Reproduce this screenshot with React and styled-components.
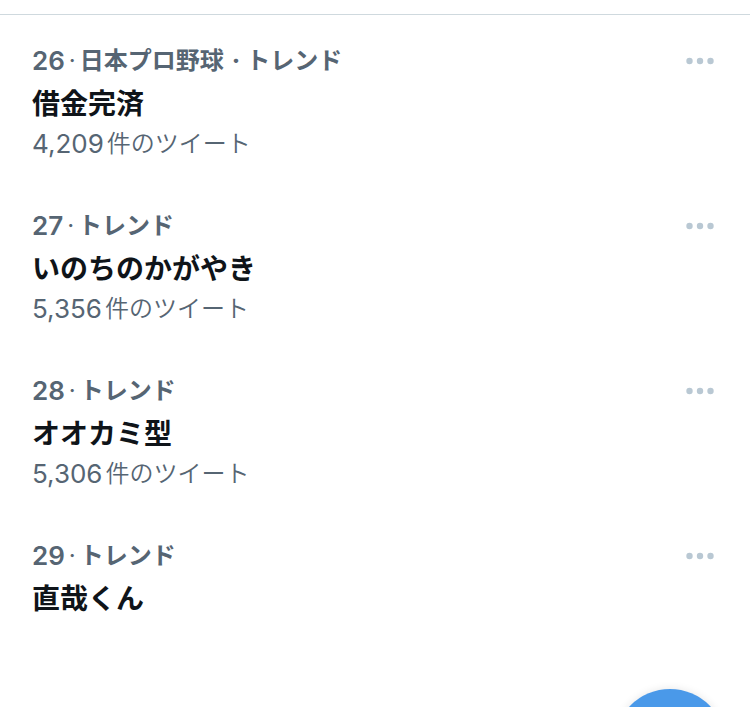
import React from "react";
import styled, { createGlobalStyle } from "styled-components";

const GlobalStyle = createGlobalStyle`
  * { box-sizing: border-box; }
  html, body { margin: 0; background: #fff; }
  body {
    font-family: Inter, "Noto Sans CJK JP", sans-serif;
    color: #0f1419;
    -webkit-font-smoothing: antialiased;
  }
`;

const Page = styled.main`
  padding-top: 14px;
`;

const TrendList = styled.ul`
  list-style: none;
  margin: 0;
  padding: 8px 0 0;
  border-top: 1px solid #cfd9de;
`;

const TrendItem = styled.li`
  display: flex;
  justify-content: space-between;
  align-items: flex-start;
  padding: 20px 36px 29px 32px;
`;

const Details = styled.div`
  min-width: 0;
`;

const Context = styled.div`
  display: flex;
  gap: 4px;
  font-size: 24px;
  line-height: 36px;
  font-weight: 600;
  color: #566573;
`;

const Rank = styled.span`
  font-size: 26px;
`;

const Dot = styled.span`
  font-weight: 400;
`;

const Label = styled.span`
  & + &::before {
    content: "·";
    margin-right: 6px;
    margin-left: 4px;
    font-weight: 800;
  }
`;

const Title = styled.h2`
  margin: 0;
  font-size: 28px;
  line-height: 50px;
  font-weight: 700;
`;

const Count = styled.div`
  display: flex;
  gap: 3px;
  font-size: 24px;
  line-height: 30px;
  color: #566573;
`;

const CountNumber = styled.span`
  font-size: 26px;
`;

const CountUnit = styled.span`
  font-weight: 350;
`;

const MoreButton = styled.button`
  display: flex;
  align-items: center;
  height: 36px;
  padding: 0;
  border: 0;
  background: none;
  color: #b9c8d3;
  cursor: pointer;
`;

const ComposeButton = styled.button`
  position: fixed;
  right: 24px;
  bottom: -94px;
  width: 112px;
  height: 112px;
  border: 0;
  border-radius: 50%;
  background: #4a99e9;
  box-shadow: 0 0 8px rgba(0, 0, 0, 0.1);
`;

const trends = [
  { rank: "26", labels: ["日本プロ野球", "トレンド"], title: "借金完済", count: "4,209" },
  { rank: "27", labels: ["トレンド"], title: "いのちのかがやき", count: "5,356" },
  { rank: "28", labels: ["トレンド"], title: "オオカミ型", count: "5,306" },
  { rank: "29", labels: ["トレンド"], title: "直哉くん" },
];

function Trend({ rank, labels, title, count }) {
  return (
    <TrendItem>
      <Details>
        <Context>
          <Rank>{rank}</Rank>
          <Dot>·</Dot>
          {labels.map((label) => (
            <Label key={label}>{label}</Label>
          ))}
        </Context>
        <Title>{title}</Title>
        {count && (
          <Count>
            <CountNumber>{count}</CountNumber>
            <CountUnit>件のツイート</CountUnit>
          </Count>
        )}
      </Details>
      <MoreButton type="button" aria-label="もっと見る">
        <svg width="28" height="8" viewBox="0 0 28 8" fill="currentColor" aria-hidden="true">
          <circle cx="3.5" cy="4" r="3.2" />
          <circle cx="14" cy="4" r="3.2" />
          <circle cx="24.5" cy="4" r="3.2" />
        </svg>
      </MoreButton>
    </TrendItem>
  );
}

export default function App() {
  return (
    <Page>
      <GlobalStyle />
      <TrendList>
        {trends.map((trend) => (
          <Trend key={trend.rank} {...trend} />
        ))}
      </TrendList>
      <ComposeButton type="button" aria-label="ツイートする" />
    </Page>
  );
}
